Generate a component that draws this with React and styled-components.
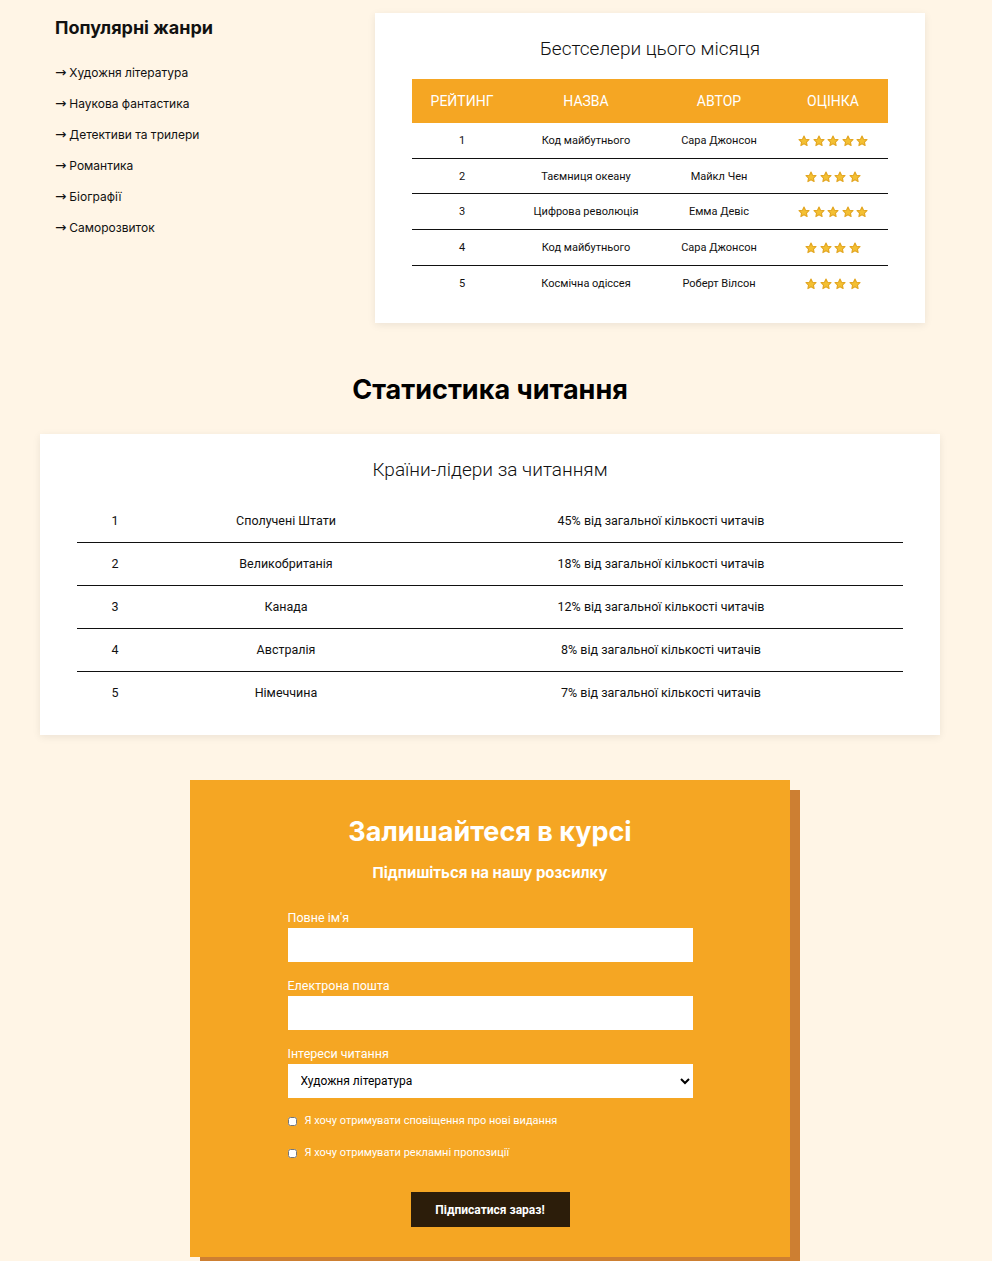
import styled, { createGlobalStyle } from 'styled-components'

const GlobalStyle = createGlobalStyle`
  html, body {
    margin: 0;
    padding: 0;
    background: #fff5e6;
    color: #111;
    font-family: Inter, 'Noto Sans', sans-serif;
  }
`

const Page = styled.div`
  width: 900px;
  margin-left: 40px;
  padding-top: 13px;
  padding-bottom: 4px;
`

const Top = styled.section`
  display: flex;
  padding: 0 15px;
`

const Aside = styled.aside`
  width: 320px;
  flex-shrink: 0;

  h3 {
    margin: 4px 0 26px;
    font-size: 18px;
    font-weight: 700;
    line-height: 22px;
  }
`

const GenreList = styled.ul`
  list-style: none;
  margin: 0;
  padding: 0;
  display: flex;
  flex-direction: column;
  gap: 15px;
`

const Genre = styled.li`
  font-size: 12px;
  line-height: 16px;
  height: 16px;
  color: #111;
`

const Arrow = styled.span`
  font-family: 'DejaVu Sans', sans-serif;
  font-size: 13.5px;
  line-height: 0;
  margin-right: 3px;
`

const Card = styled.div`
  background: #fff;
  box-shadow: 0 2px 8px rgba(0, 0, 0, 0.08);
  padding: 25px 37px ${(p) => p.$bottom}px;
  box-sizing: border-box;
  width: ${(p) => p.$width}px;
`

const CardTitle = styled.h4`
  margin: 0 0 19px;
  text-align: center;
  font-family: Roboto, sans-serif;
  font-weight: 300;
  font-size: 19px;
  line-height: 22px;
  color: #111;
`

const Table = styled.table`
  width: 100%;
  border-collapse: collapse;
  font-family: Roboto, sans-serif;
  table-layout: fixed;
`

const Th = styled.th`
  background: #f5a623;
  color: #fff;
  font-weight: 400;
  font-size: 14px;
  line-height: 16px;
  padding: 14px 0;
  text-transform: uppercase;
  width: ${(p) => (p.$w ? p.$w + 'px' : 'auto')};
`

const Row = styled.tr`
  border-bottom: 1px solid #111;
  &:last-child {
    border-bottom: none;
  }
`

const Td = styled.td`
  text-align: center;
  font-size: ${(p) => (p.$big ? 12.5 : 11)}px;
  line-height: ${(p) => (p.$big ? 14 : 13)}px;
  padding: ${(p) => (p.$big ? '14px 0' : '11px 0 10.6px')};
  color: #111;
  width: ${(p) => (p.$w ? p.$w + 'px' : 'auto')};
`

const Stars = styled.span`
  display: inline-flex;
  gap: 2.5px;
  vertical-align: middle;
`

const SectionTitle = styled.h2`
  margin: 51px 0 28px;
  text-align: center;
  font-size: 27px;
  line-height: 32px;
  font-weight: 700;
  color: #000;
`

const Subscribe = styled.section`
  width: 600px;
  margin: 45px auto 0;
  background: #f5a623;
  box-shadow: 10px 10px 0 #cd7f32;
  padding: 36px 0 30px;
  color: #fff;
  font-family: Roboto, sans-serif;
`

const SubTitle = styled.h2`
  margin: 0;
  text-align: center;
  font-family: Inter, sans-serif;
  font-size: 27px;
  line-height: 32px;
  font-weight: 700;
  color: #fff;
`

const SubLead = styled.p`
  margin: 16px 0 29px;
  text-align: center;
  font-family: Inter, sans-serif;
  font-size: 15px;
  line-height: 18px;
  font-weight: 700;
`

const Form = styled.form`
  width: 405px;
  margin: 0 auto;
  display: flex;
  flex-direction: column;
`

const Field = styled.div`
  display: flex;
  flex-direction: column;
  gap: 3px;
  margin-bottom: 17px;
`

const Label = styled.label`
  font-size: 12.5px;
  line-height: 14px;
  color: #fff;
`

const Input = styled.input`
  height: 34px;
  border: none;
  box-sizing: border-box;
  background: #fff;
  padding: 0 12px;
  font-size: 12px;
  outline: none;
`

const Select = styled.select`
  height: 34px;
  border: none;
  box-sizing: border-box;
  background: #fff;
  padding: 0 8px 0 9px;
  font-family: Roboto, sans-serif;
  font-size: 12px;
  color: #000;
  outline: none;
`

const Check = styled.label`
  display: flex;
  align-items: center;
  gap: 8px;
  font-size: 11px;
  line-height: 12px;
  color: #fff;
  margin-top: ${(p) => p.$top}px;

  input {
    width: 9px;
    height: 9px;
    margin: 0;
  }
`

const Button = styled.button`
  align-self: center;
  margin-top: 33px;
  width: 159px;
  height: 35px;
  border: none;
  background: #2c1d0a;
  color: #fff;
  font-family: Roboto, sans-serif;
  font-weight: 700;
  font-size: 12px;
  cursor: pointer;
`

function Star() {
  return (
    <svg width="12" height="12" viewBox="0 0 24 24">
      <path
        d="M12 2l3 6.4 7 .9-5.1 4.8 1.3 7L12 17.7l-6.2 3.4 1.3-7L2 9.3l7-.9z"
        fill="#f4c032"
        stroke="#e2a520"
        strokeWidth="2.2"
        strokeLinejoin="round"
      />
    </svg>
  )
}

const genres = [
  'Художня література',
  'Наукова фантастика',
  'Детективи та трилери',
  'Романтика',
  'Біографії',
  'Саморозвиток',
]

const books = [
  [1, 'Код майбутнього', 'Сара Джонсон', 5],
  [2, 'Таємниця океану', 'Майкл Чен', 4],
  [3, 'Цифрова революція', 'Емма Девіс', 5],
  [4, 'Код майбутнього', 'Сара Джонсон', 4],
  [5, 'Космічна одіссея', 'Роберт Вілсон', 4],
]

const countries = [
  [1, 'Сполучені Штати', '45%'],
  [2, 'Великобританія', '18%'],
  [3, 'Канада', '12%'],
  [4, 'Австралія', '8%'],
  [5, 'Німеччина', '7%'],
]

export default function App() {
  return (
    <>
      <GlobalStyle />
      <Page>
        <Top>
          <Aside>
            <h3>Популярні жанри</h3>
            <GenreList>
              {genres.map((g) => (
                <Genre key={g}>
                  <Arrow>→</Arrow>
                  {g}
                </Genre>
              ))}
            </GenreList>
          </Aside>
          <Card $width={550} $bottom={23}>
            <CardTitle>Бестселери цього місяця</CardTitle>
            <Table>
              <thead>
                <tr>
                  <Th $w={100}>Рейтинг</Th>
                  <Th $w={148}>Назва</Th>
                  <Th $w={118}>Автор</Th>
                  <Th>Оцінка</Th>
                </tr>
              </thead>
              <tbody>
                {books.map(([n, title, author, stars]) => (
                  <Row key={n}>
                    <Td>{n}</Td>
                    <Td>{title}</Td>
                    <Td>{author}</Td>
                    <Td>
                      <Stars>
                        {Array.from({ length: stars }).map((_, i) => (
                          <Star key={i} />
                        ))}
                      </Stars>
                    </Td>
                  </Row>
                ))}
              </tbody>
            </Table>
          </Card>
        </Top>

        <SectionTitle>Статистика читання</SectionTitle>
        <Card $width={900} $bottom={21}>
          <CardTitle>Країни-лідери за читанням</CardTitle>
          <Table>
            <tbody>
              {countries.map(([n, name, pct]) => (
                <Row key={n}>
                  <Td $big $w={76}>{n}</Td>
                  <Td $big $w={266}>{name}</Td>
                  <Td $big>{pct} від загальної кількості читачів</Td>
                </Row>
              ))}
            </tbody>
          </Table>
        </Card>

        <Subscribe>
          <SubTitle>Залишайтеся в курсі</SubTitle>
          <SubLead>Підпишіться на нашу розсилку</SubLead>
          <Form onSubmit={(e) => e.preventDefault()}>
            <Field>
              <Label htmlFor="name">Повне ім'я</Label>
              <Input id="name" type="text" />
            </Field>
            <Field>
              <Label htmlFor="email">Електрона пошта</Label>
              <Input id="email" type="email" />
            </Field>
            <Field>
              <Label htmlFor="interest">Інтереси читання</Label>
              <Select id="interest" defaultValue="fiction">
                <option value="fiction">Художня література</option>
                <option value="scifi">Наукова фантастика</option>
                <option value="mystery">Детективи та трилери</option>
              </Select>
            </Field>
            <Check $top={0}>
              <input type="checkbox" />
              Я хочу отримувати сповіщення про нові видання
            </Check>
            <Check $top={20}>
              <input type="checkbox" />
              Я хочу отримувати рекламні пропозиції
            </Check>
            <Button type="submit">Підписатися зараз!</Button>
          </Form>
        </Subscribe>
      </Page>
    </>
  )
}
